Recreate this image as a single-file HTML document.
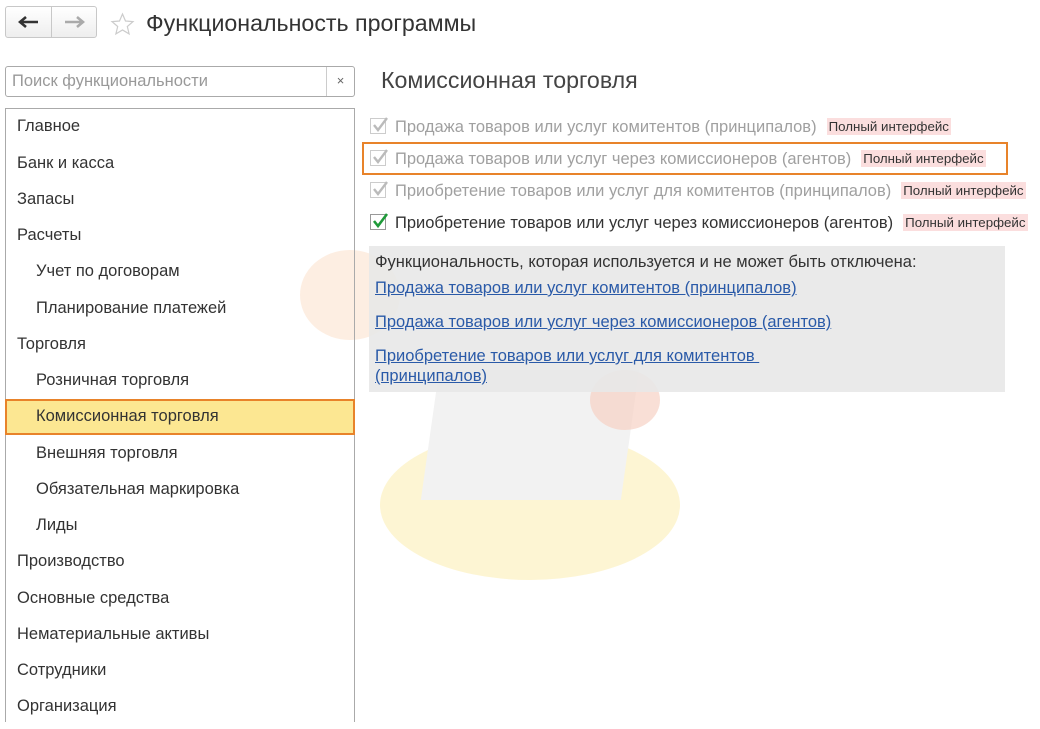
<!DOCTYPE html>
<html><head><meta charset="utf-8"><style>
*{margin:0;padding:0;box-sizing:border-box}
body{width:1040px;height:729px;background:#fff;font-family:"Liberation Sans",Arial,sans-serif;position:relative;overflow:hidden;color:#333}
.abs{position:absolute}
.nav{left:5px;top:6px;width:92px;height:32px;border:1px solid #c8c8c8;border-radius:3px;background:linear-gradient(#fff,#eee)}
.title{left:146px;top:10px;font-size:23.2px;color:#333}
.search{left:5px;top:66px;width:350px;height:31px;border:1px solid #aaa;border-radius:3px}
.search span{position:absolute;left:6px;top:5px;color:#999;font-size:16.5px}
.search i{position:absolute;right:0;top:0;width:28px;height:29px;border-left:1px solid #ccc;font-style:normal;text-align:center;line-height:28px;font-size:13px;color:#666}
.panel{left:5px;top:108px;width:350px;height:615px;border:1px solid #aaa;overflow:hidden}
.item{position:absolute;font-size:16.5px;color:#333;white-space:nowrap}
.sel{left:5px;top:399px;width:350px;height:36px;background:#fce792;border:2px solid #e8832a}
.h2{left:381px;top:67px;font-size:23.2px;color:#444}
.row{position:absolute;left:370px;font-size:16.5px;white-space:nowrap;color:#a0a0a0}
.cb{display:inline-block;width:16px;height:16px;border:1px solid #ccc;background:#fff;vertical-align:-2px;margin-right:9px;position:relative}
.cb svg{position:absolute;left:0;top:-3px}
.badge{background:#fbdede;color:#333;font-size:13.3px;padding:1px 2px;margin-left:10px;vertical-align:1px}
.gray{left:369px;top:246px;width:636px;height:146px;background:rgba(232,232,232,.9)}
.lnk{position:absolute;left:375px;font-size:16.5px;color:#2a5aa8;text-decoration:underline;white-space:nowrap}
</style></head><body>
<div class="abs" style="left:380px;top:430px;width:300px;height:150px;border-radius:50%;background:#fdf3c8;opacity:.8"></div>
<div class="abs" style="left:430px;top:370px;width:200px;height:130px;background:#f2f2f2;transform:skewX(-8deg)"></div>
<div class="abs" style="left:590px;top:370px;width:70px;height:60px;border-radius:50%;background:#f6d2c4;opacity:.7"></div>
<div class="abs" style="left:300px;top:250px;width:100px;height:90px;border-radius:50%;background:#fbe3cf;opacity:.6"></div>
<div class="nav abs">
<div class="abs" style="left:45px;top:0;width:1px;height:30px;background:#c8c8c8"></div>
<svg class="abs" style="left:12px;top:8px" width="22" height="14"><path d="M2 7h18M8 2L2 7l6 5" fill="none" stroke="#333" stroke-width="2.6"/></svg>
<svg class="abs" style="left:57px;top:8px" width="22" height="14"><path d="M2 7h18M14 2l6 5-6 5" fill="none" stroke="#aaa" stroke-width="2.6"/></svg>
</div>
<svg class="abs" style="left:110px;top:12px" width="25" height="24" viewBox="0 0 24 24"><path d="M12 2l3 7 7.5.6-5.7 4.9 1.8 7.4L12 18l-6.6 3.9 1.8-7.4L1.5 9.6 9 9z" fill="none" stroke="#ccc" stroke-width="1.2"/></svg>
<div class="title abs">Функциональность программы</div>
<div class="search abs"><span>Поиск функциональности</span><i>×</i></div>
<div class="panel abs"></div>
<div class="sel abs"></div>
<div class="item" style="left:17px;top:117px">Главное</div>
<div class="item" style="left:17px;top:154px">Банк и касса</div>
<div class="item" style="left:17px;top:190px">Запасы</div>
<div class="item" style="left:17px;top:226px">Расчеты</div>
<div class="item" style="left:36px;top:262px">Учет по договорам</div>
<div class="item" style="left:36px;top:299px">Планирование платежей</div>
<div class="item" style="left:17px;top:335px">Торговля</div>
<div class="item" style="left:36px;top:371px">Розничная торговля</div>
<div class="item" style="left:36px;top:407px">Комиссионная торговля</div>
<div class="item" style="left:36px;top:444px">Внешняя торговля</div>
<div class="item" style="left:36px;top:480px">Обязательная маркировка</div>
<div class="item" style="left:36px;top:516px">Лиды</div>
<div class="item" style="left:17px;top:552px">Производство</div>
<div class="item" style="left:17px;top:589px">Основные средства</div>
<div class="item" style="left:17px;top:625px">Нематериальные активы</div>
<div class="item" style="left:17px;top:661px">Сотрудники</div>
<div class="item" style="left:17px;top:697px">Организация</div>
<div class="abs" style="left:5px;top:722px;width:350px;height:7px;background:#fff"></div>
<div class="h2 abs">Комиссионная торговля</div>
<div class="abs" style="left:362px;top:142px;width:646px;height:33px;border:2px solid #e8832a"></div>
<div class="row" style="top:118px"><span class="cb"><svg width="18" height="18"><path d="M3 9l4 5 9-12" fill="none" stroke="#bbb" stroke-width="2.4"/></svg></span>Продажа товаров или услуг комитентов (принципалов)<span class="badge">Полный интерфейс</span></div>
<div class="row" style="top:150px"><span class="cb"><svg width="18" height="18"><path d="M3 9l4 5 9-12" fill="none" stroke="#bbb" stroke-width="2.4"/></svg></span>Продажа товаров или услуг через комиссионеров (агентов)<span class="badge">Полный интерфейс</span></div>
<div class="row" style="top:182px"><span class="cb"><svg width="18" height="18"><path d="M3 9l4 5 9-12" fill="none" stroke="#bbb" stroke-width="2.4"/></svg></span>Приобретение товаров или услуг для комитентов (принципалов)<span class="badge">Полный интерфейс</span></div>
<div class="row" style="top:214px;color:#333"><span class="cb" style="border-color:#999"><svg width="18" height="18"><path d="M3 9l4 5 9-12" fill="none" stroke="#1f9a3a" stroke-width="2.6"/></svg></span>Приобретение товаров или услуг через комиссионеров (агентов)<span class="badge">Полный интерфейс</span></div>
<div class="gray abs"></div>
<div class="abs" style="left:375px;top:253px;font-size:16.5px;color:#333">Функциональность, которая используется и не может быть отключена:</div>
<div class="lnk" style="top:279px">Продажа товаров или услуг комитентов (принципалов)</div>
<div class="lnk" style="top:313px">Продажа товаров или услуг через комиссионеров (агентов)</div>
<div class="lnk" style="top:347px">Приобретение товаров или услуг для комитентов&nbsp;</div>
<div class="lnk" style="top:367px">(принципалов)</div>
</body></html>
